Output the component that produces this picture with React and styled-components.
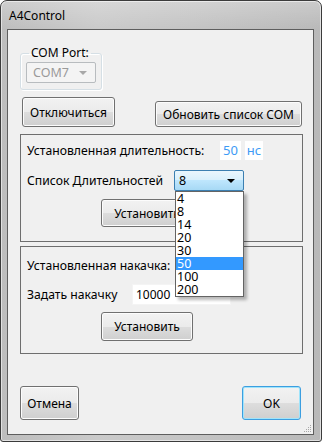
import styled, { createGlobalStyle } from 'styled-components';

const GlobalStyle = createGlobalStyle`
  html, body {
    margin: 0;
    padding: 0;
    background: #ffffff;
  }
  body {
    font-family: "Noto Sans", "Open Sans", "Liberation Sans", sans-serif;
    color: #000;
  }
`;

const Window = styled.div`
  width: 322px;
  height: 442px;
  box-sizing: border-box;
  border: 1px solid #3b3b3b;
  border-radius: 7px 7px 3px 3px;
  background: linear-gradient(90deg, #bdbdbd 0%, #cacaca 30%, #c4c4c4 60%, #b9b9b9 100%);
  display: flex;
  flex-direction: column;
  overflow: hidden;
  box-shadow: inset 0 0 0 1px rgba(255, 255, 255, 0.55);
`;

const TitleBar = styled.div`
  height: 28px;
  display: flex;
  align-items: center;
  padding-left: 8px;
  font-size: 12px;
  color: #000;
  background: linear-gradient(180deg, rgba(255,255,255,0.25) 0%, rgba(255,255,255,0) 100%);
`;

const Client = styled.div`
  position: relative;
  margin: 0 7px 6px 6px;
  flex: 1;
  border: 1px solid #5e5e5e;
  background: #f0f0f0;
  display: flex;
  flex-direction: column;
`;

const PortGroup = styled.fieldset`
  margin: 16px 0 0 12px;
  width: 82px;
  box-sizing: border-box;
  padding: 2px 5px 6px 5px;
  border: 1px solid #d5dfe5;
  border-radius: 3px;
  box-shadow: inset 1px 1px 0 #fff, 1px 1px 0 #fff;
`;

const Legend = styled.legend`
  font-size: 12px;
  line-height: 14px;
  padding: 0 2px;
  margin-left: 3px;
  color: #000;
`;

const Combo = styled.div`
  position: relative;
  box-sizing: border-box;
  width: ${p => p.$w}px;
  height: 21px;
  border: 1px solid ${p => (p.$disabled ? '#b8bcbf' : '#3c7fb1')};
  border-radius: 2px;
  background: ${p =>
    p.$disabled
      ? '#f4f4f4'
      : 'linear-gradient(180deg, #eaf6fd 0%, #d9f0fc 45%, #bee6fd 50%, #a7d9f5 100%)'};
  color: ${p => (p.$disabled ? '#9a9a9a' : '#000')};
  display: flex;
  align-items: center;
  justify-content: space-between;
  padding: 0 8px 0 ${p => (p.$disabled ? 6 : 4)}px;
  font-size: 12.5px;
`;

const Arrow = styled.span`
  width: 0;
  height: 0;
  border-left: 4px solid transparent;
  border-right: 4px solid transparent;
  border-top: 4px solid ${p => (p.$disabled ? '#a8a8a8' : '#000')};
`;

const DropList = styled.ul`
  position: absolute;
  z-index: 5;
  top: 20px;
  left: 0;
  width: 69px;
  margin: 0;
  padding: 0;
  list-style: none;
  box-sizing: border-box;
  background: #fff;
  border: 1px solid #646464;
  box-shadow: 3px 3px 3px rgba(0, 0, 0, 0.28);
`;

const DropItem = styled.li`
  height: 13px;
  line-height: 13px;
  padding-left: 1px;
  font-size: 12.5px;
  background: ${p => (p.$active ? '#3399ff' : 'transparent')};
  color: ${p => (p.$active ? '#fff' : '#000')};
`;

const ButtonRow = styled.div`
  display: flex;
  justify-content: space-between;
  align-items: flex-end;
  margin: 7px 11px 0 14px;
`;

const Button = styled.button`
  box-sizing: border-box;
  width: ${p => p.$w}px;
  height: ${p => p.$h}px;
  padding: 0;
  font-family: inherit;
  font-size: 12px;
  color: #000;
  border: 1px solid ${p => (p.$default ? '#3c9ee0' : '#707070')};
  border-radius: 3px;
  background: linear-gradient(180deg, #f2f2f2 0%, #ebebeb 50%, #dddddd 51%, #cfcfcf 100%);
  box-shadow: inset 0 0 0 1px ${p => (p.$default ? '#9fe4fb' : '#fcfcfc')};
`;

const Group = styled.div`
  margin: ${p => p.$top}px 10px 0 12px;
  height: 108px;
  box-sizing: border-box;
  border: 1px solid #6e6e6e;
  padding: ${p => p.$pad}px 0 0 6px;
  display: flex;
  flex-direction: column;
`;

const Row = styled.div`
  display: flex;
  align-items: center;
  height: ${p => p.$h}px;
  margin-top: ${p => p.$mt || 0}px;
`;

const Label = styled.span`
  width: ${p => p.$w}px;
  flex-shrink: 0;
  font-size: 12.2px;
  white-space: nowrap;
`;

const ValueBox = styled.span`
  width: ${p => p.$w}px;
  height: 19px;
  margin-right: 4px;
  background: #fff;
  color: #3d9bf5;
  font-size: 13px;
  line-height: 19px;
  text-align: center;
`;

const TextInput = styled.div`
  box-sizing: border-box;
  width: 99px;
  height: 21px;
  background: #fff;
  border: 1px solid #f4f4f4;
  font-size: 12px;
  line-height: 19px;
  padding-left: 3px;
`;

const ButtonSlot = styled.div`
  margin: ${p => p.$mt}px 0 0 74px;
`;

const Footer = styled.div`
  display: flex;
  justify-content: space-between;
  margin: auto 12px 14px 12px;
`;

const Grip = styled.svg`
  position: absolute;
  right: 1px;
  bottom: 1px;
`;

const durations = ['4', '8', '14', '20', '30', '50', '100', '200'];

const App = () => (
  <>
    <GlobalStyle />
    <Window>
      <TitleBar>A4Control</TitleBar>
      <Client>
        <PortGroup>
          <Legend>COM Port:</Legend>
          <Combo $w={70} $disabled>
            COM7
            <Arrow $disabled />
          </Combo>
        </PortGroup>

        <ButtonRow>
          <Button $w={93} $h={30}>Отключиться</Button>
          <Button $w={147} $h={26}>Обновить список COM</Button>
        </ButtonRow>

        <Group $top={7} $pad={6}>
          <Row $h={19}>
            <Label $w={193}>Установленная длительность:</Label>
            <ValueBox $w={21}>50</ValueBox>
            <ValueBox $w={18}>нс</ValueBox>
          </Row>
          <Row $h={21} $mt={10}>
            <Label $w={147}>Список Длительностей</Label>
            <Combo $w={70}>
              8
              <Arrow />
              <DropList>
                {durations.map(d => (
                  <DropItem key={d} $active={d === '50'}>{d}</DropItem>
                ))}
              </DropList>
            </Combo>
          </Row>
          <ButtonSlot $mt={8}>
            <Button $w={92} $h={28}>Установить</Button>
          </ButtonSlot>
        </Group>

        <Group $top={4} $pad={9}>
          <Row $h={19}>
            <Label $w={190}>Установленная накачка:</Label>
          </Row>
          <Row $h={21} $mt={9}>
            <Label $w={105}>Задать накачку</Label>
            <TextInput>10000</TextInput>
          </Row>
          <ButtonSlot $mt={7}>
            <Button $w={92} $h={29}>Установить</Button>
          </ButtonSlot>
        </Group>

        <Footer>
          <Button $w={59} $h={34}>Отмена</Button>
          <Button $w={59} $h={34} $default>OK</Button>
        </Footer>

        <Grip width="8" height="8" viewBox="0 0 8 8">
          <g fill="#a8a8a8">
            <rect x="6" y="0" width="1" height="1" />
            <rect x="4" y="2" width="1" height="1" />
            <rect x="6" y="2" width="1" height="1" />
            <rect x="2" y="4" width="1" height="1" />
            <rect x="4" y="4" width="1" height="1" />
            <rect x="6" y="4" width="1" height="1" />
            <rect x="0" y="6" width="1" height="1" />
            <rect x="2" y="6" width="1" height="1" />
            <rect x="4" y="6" width="1" height="1" />
            <rect x="6" y="6" width="1" height="1" />
          </g>
        </Grip>
      </Client>
    </Window>
  </>
);

export default App;
